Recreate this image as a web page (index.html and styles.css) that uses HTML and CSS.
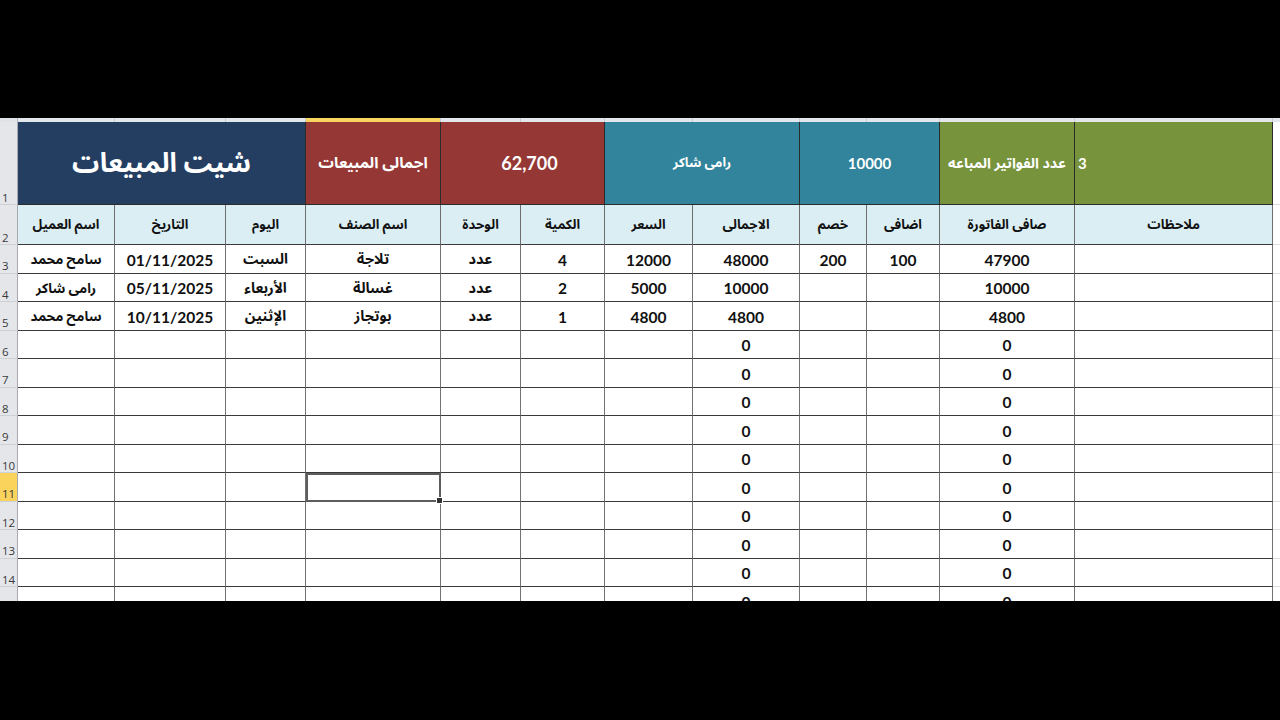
FILE: index.html
```html
<!DOCTYPE html>
<html lang="ar">
<head>
<meta charset="utf-8">
<title>شيت المبيعات</title>
<link rel="stylesheet" href="styles.css">
</head>
<body>
<div class="screen">
  <div class="sheet">
    <div class="grid">
      <!-- column header strip -->
      <div class="ch corner"></div>
      <div class="ch"></div><div class="ch"></div><div class="ch"></div>
      <div class="ch ch-sel"></div>
      <div class="ch"></div><div class="ch"></div><div class="ch"></div><div class="ch"></div>
      <div class="ch"></div><div class="ch"></div><div class="ch"></div><div class="ch"></div>
      <div class="ch last"></div>

      <!-- row 1 -->
      <div class="rh">1</div>
      <div class="top navy title span3">شيت المبيعات</div>
      <div class="top red lg">اجمالى المبيعات</div>
      <div class="top red num big span2">62,700</div>
      <div class="top teal span2">رامى شاكر</div>
      <div class="top teal num span2">10000</div>
      <div class="top green md">عدد الفواتير المباعه</div>
      <div class="top green left num">3</div>
      <div class="blank"></div>

      <!-- row 2 -->
      <div class="rh">2</div>
      <div class="hd">اسم العميل</div>
      <div class="hd">التاريخ</div>
      <div class="hd">اليوم</div>
      <div class="hd">اسم الصنف</div>
      <div class="hd">الوحدة</div>
      <div class="hd">الكمية</div>
      <div class="hd">السعر</div>
      <div class="hd">الاجمالى</div>
      <div class="hd">خصم</div>
      <div class="hd">اضافى</div>
      <div class="hd">صافى الفاتورة</div>
      <div class="hd">ملاحظات</div>
      <div class="blank"></div>

      <!-- row 3 -->
      <div class="rh">3</div>
      <div class="c nm">سامح محمد</div>
      <div class="c num">01/11/2025</div>
      <div class="c">السبت</div>
      <div class="c">تلاجة</div>
      <div class="c">عدد</div>
      <div class="c num">4</div>
      <div class="c num">12000</div>
      <div class="c num">48000</div>
      <div class="c num">200</div>
      <div class="c num">100</div>
      <div class="c num">47900</div>
      <div class="c"></div>
      <div class="blank"></div>

      <!-- row 4 -->
      <div class="rh">4</div>
      <div class="c nm">رامى شاكر</div>
      <div class="c num">05/11/2025</div>
      <div class="c">الأربعاء</div>
      <div class="c">غسالة</div>
      <div class="c">عدد</div>
      <div class="c num">2</div>
      <div class="c num">5000</div>
      <div class="c num">10000</div>
      <div class="c"></div>
      <div class="c"></div>
      <div class="c num">10000</div>
      <div class="c"></div>
      <div class="blank"></div>

      <!-- row 5 -->
      <div class="rh">5</div>
      <div class="c nm">سامح محمد</div>
      <div class="c num">10/11/2025</div>
      <div class="c">الإثنين</div>
      <div class="c">بوتجاز</div>
      <div class="c">عدد</div>
      <div class="c num">1</div>
      <div class="c num">4800</div>
      <div class="c num">4800</div>
      <div class="c"></div>
      <div class="c"></div>
      <div class="c num">4800</div>
      <div class="c"></div>
      <div class="blank"></div>

      <!-- rows 6-10 -->
      <div class="rh">6</div>
      <div class="c"></div><div class="c"></div><div class="c"></div><div class="c"></div><div class="c"></div><div class="c"></div><div class="c"></div>
      <div class="c num">0</div><div class="c"></div><div class="c"></div><div class="c num">0</div><div class="c"></div>
      <div class="blank"></div>

      <div class="rh">7</div>
      <div class="c"></div><div class="c"></div><div class="c"></div><div class="c"></div><div class="c"></div><div class="c"></div><div class="c"></div>
      <div class="c num">0</div><div class="c"></div><div class="c"></div><div class="c num">0</div><div class="c"></div>
      <div class="blank"></div>

      <div class="rh">8</div>
      <div class="c"></div><div class="c"></div><div class="c"></div><div class="c"></div><div class="c"></div><div class="c"></div><div class="c"></div>
      <div class="c num">0</div><div class="c"></div><div class="c"></div><div class="c num">0</div><div class="c"></div>
      <div class="blank"></div>

      <div class="rh">9</div>
      <div class="c"></div><div class="c"></div><div class="c"></div><div class="c"></div><div class="c"></div><div class="c"></div><div class="c"></div>
      <div class="c num">0</div><div class="c"></div><div class="c"></div><div class="c num">0</div><div class="c"></div>
      <div class="blank"></div>

      <div class="rh">10</div>
      <div class="c"></div><div class="c"></div><div class="c"></div><div class="c"></div><div class="c"></div><div class="c"></div><div class="c"></div>
      <div class="c num">0</div><div class="c"></div><div class="c"></div><div class="c num">0</div><div class="c"></div>
      <div class="blank"></div>

      <!-- row 11 with selected cell -->
      <div class="rh rh-sel">11</div>
      <div class="c"></div><div class="c"></div><div class="c"></div>
      <div class="c sel"></div>
      <div class="c"></div><div class="c"></div><div class="c"></div>
      <div class="c num">0</div><div class="c"></div><div class="c"></div><div class="c num">0</div><div class="c"></div>
      <div class="blank"></div>

      <div class="rh">12</div>
      <div class="c"></div><div class="c"></div><div class="c"></div><div class="c"></div><div class="c"></div><div class="c"></div><div class="c"></div>
      <div class="c num">0</div><div class="c"></div><div class="c"></div><div class="c num">0</div><div class="c"></div>
      <div class="blank"></div>

      <div class="rh">13</div>
      <div class="c"></div><div class="c"></div><div class="c"></div><div class="c"></div><div class="c"></div><div class="c"></div><div class="c"></div>
      <div class="c num">0</div><div class="c"></div><div class="c"></div><div class="c num">0</div><div class="c"></div>
      <div class="blank"></div>

      <div class="rh">14</div>
      <div class="c"></div><div class="c"></div><div class="c"></div><div class="c"></div><div class="c"></div><div class="c"></div><div class="c"></div>
      <div class="c num">0</div><div class="c"></div><div class="c"></div><div class="c num">0</div><div class="c"></div>
      <div class="blank"></div>

      <div class="rh">15</div>
      <div class="c"></div><div class="c"></div><div class="c"></div><div class="c"></div><div class="c"></div><div class="c"></div><div class="c"></div>
      <div class="c num">0</div><div class="c"></div><div class="c"></div><div class="c num">0</div><div class="c"></div>
      <div class="blank"></div>
    </div>
  </div>
</div>
</body>
</html>
```

FILE: styles.css
```css
* { box-sizing: border-box; }

html, body {
  margin: 0;
  padding: 0;
  background: #000;
}

.screen {
  width: 1280px;
  height: 720px;
  padding-top: 118px;
  background: #000;
}

.sheet {
  width: 1280px;
  height: 483px;
  overflow: hidden;
  background: #fff;
}

.grid {
  display: grid;
  grid-template-columns: 18px 97px 111px 80px 135px 80px 84px 88px 107px 67px 73px 135px 198px 1fr;
  grid-template-rows: 4px 83px 40px repeat(13, 28.5px);
  font-family: Lato, "Noto Sans Arabic", "Noto Naskh Arabic", "Noto Kufi Arabic", "DejaVu Sans", sans-serif;
  font-weight: 700;
  color: #111;
}

.grid > div {
  display: flex;
  align-items: center;
  justify-content: center;
  white-space: nowrap;
  overflow: hidden;
}

/* column header strip */
.ch {
  background: #e3e6ea;
  border-right: 1px solid #c9ccd1;
}
.ch.corner { background: #dfe2e6; border-right: 1px solid #b4b8be; }
.ch.last { border-right: none; }
.ch-sel { background: #f7d55e; }

/* row headers */
.grid > .rh {
  background: #e4e6ea;
  border-right: 1px solid #a7abb1;
  border-bottom: 1px solid #cdd0d5;
  justify-content: flex-start;
  align-items: flex-end;
  padding: 0 0 1px 2px;
  font-family: "Open Sans", "Liberation Sans", sans-serif;
  font-weight: 400;
  font-size: 11.5px;
  color: #3a3a3a;
  line-height: 1;
}
.grid > .rh-sel { background: #f9d35c; }

/* top banner cells */
.top {
  color: #fff;
  font-size: 13px;
  border-right: 1px solid #2b2b2b;
  border-bottom: 1px solid #2b2b2b;
}
.span2 { grid-column: span 2; }
.span3 { grid-column: span 3; }
.navy { background: #243e62; }
.red { background: #953735; }
.teal { background: #31849b; }
.green { background: #77933c; }
.title { font-size: 27px; }
.top.lg { font-size: 15.5px; }
.top.md { font-size: 14.3px; }
.top.num { font-size: 15px; }
.top.big { font-size: 18px; padding-left: 14px; }
.grid > .left { justify-content: flex-start; padding-left: 3px; }

/* header row */
.hd {
  background: #daeef3;
  font-size: 13.2px;
  padding-top: 1px;
  border-right: 1px solid #6e6e6e;
  border-bottom: 1px solid #3a3a3a;
}

/* data cells */
.c {
  font-size: 14.5px;
  padding-top: 2px;
  border-right: 1px solid #727272;
  border-bottom: 1px solid #3a3a3a;
}
.c.nm { font-size: 13.5px; }
.c.num { font-size: 15.5px; }

.blank {
  background: #fff;
  border-bottom: 1px solid #dcdcdc;
}

/* active cell */
.grid > .sel {
  position: relative;
  overflow: visible;
  outline: 2px solid #5d5d5d;
  outline-offset: -2px;
}
.sel::after {
  content: "";
  position: absolute;
  right: -3px;
  bottom: -3px;
  width: 5px;
  height: 5px;
  background: #333;
  border: 1px solid #fff;
}
```
